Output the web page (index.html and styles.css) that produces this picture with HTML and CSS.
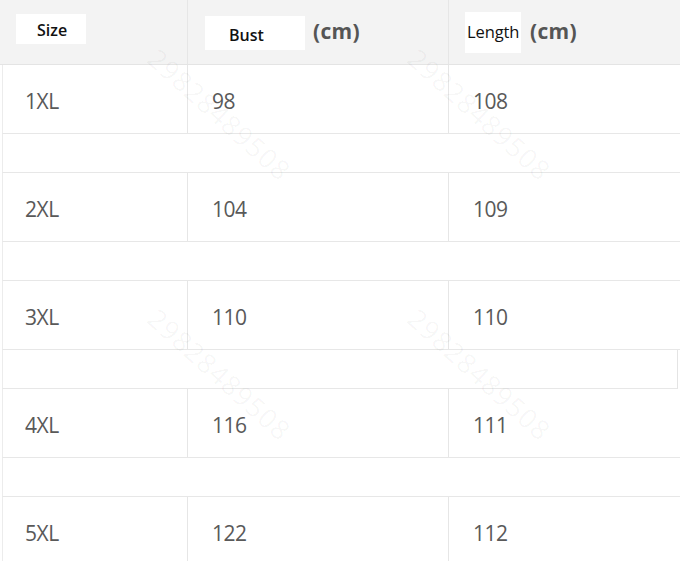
FILE: index.html
```html
<!DOCTYPE html>
<html>
<head>
<meta charset="utf-8">
<link rel="stylesheet" href="styles.css">
</head>
<body>
<div class="chart">
  <div class="row head">
    <div class="cell c1"><span class="tag tag-size">Size</span></div>
    <div class="cell c2"><span class="tag tag-bust">Bust</span><span class="unit">(cm)</span></div>
    <div class="cell c3"><span class="tag tag-len">Length</span><span class="unit">(cm)</span></div>
  </div>
  <div class="row data"><div class="cell c1">1XL</div><div class="cell c2">98</div><div class="cell c3">108</div></div>
  <div class="row gap"></div>
  <div class="row data"><div class="cell c1">2XL</div><div class="cell c2">104</div><div class="cell c3">109</div></div>
  <div class="row gap"></div>
  <div class="row data"><div class="cell c1">3XL</div><div class="cell c2">110</div><div class="cell c3">110</div></div>
  <div class="row gap gap-edge"></div>
  <div class="row data"><div class="cell c1">4XL</div><div class="cell c2">116</div><div class="cell c3">111</div></div>
  <div class="row gap"></div>
  <div class="row data"><div class="cell c1">5XL</div><div class="cell c2">122</div><div class="cell c3">112</div></div>

  <span class="wm wm1">29828489508</span>
  <span class="wm wm2">29828489508</span>
  <span class="wm wm3">29828489508</span>
  <span class="wm wm4">29828489508</span>
</div>
</body>
</html>
```
FILE: styles.css
```css
html, body {
  margin: 0;
  padding: 0;
  background: #ffffff;
}
body {
  width: 680px;
  height: 561px;
  overflow: hidden;
}
.chart {
  position: relative;
  width: 680px;
  height: 561px;
  overflow: hidden;
  font-family: "Open Sans", "Noto Sans", sans-serif;
}
.row {
  display: grid;
  grid-template-columns: 188px 261px 1fr;
  box-sizing: border-box;
  border-bottom: 1px solid #e7e7e7;
}
.head {
  height: 65px;
  background: #f3f3f3;
  border-bottom: 1px solid #e4e4e4;
}
.data {
  height: 69px;
  margin-left: 2px;
  border-left: 1px solid #ececec;
  grid-template-columns: 185px 261px 1fr;
}
.gap {
  height: 39px;
  margin-left: 2px;
  border-left: 1px solid #ececec;
}
.gap-edge {
  margin-right: 2px;
  border-right: 1px solid #e4e4e4;
}
.cell {
  box-sizing: border-box;
  border-right: 1px solid #e6e6e6;
  display: flex;
  align-items: center;
}
.cell.c3 {
  border-right: none;
}
.data .cell {
  padding-left: 22px;
  padding-top: 3px;
  font-size: 21px;
  color: #595959;
  letter-spacing: -0.5px;
}
.data .c2, .data .c3 {
  padding-left: 24px;
}
.head .cell {
  align-items: flex-start;
}
.tag {
  background: #ffffff;
  color: #111111;
  font-weight: 600;
  font-size: 16px;
  display: flex;
  box-sizing: border-box;
  white-space: nowrap;
}
.tag-size {
  margin: 14px 0 0 16px;
  width: 70px;
  height: 30px;
  padding: 5px 0 0 21px;
}
.tag-bust {
  margin: 16px 0 0 17px;
  width: 100px;
  height: 34px;
  padding: 8px 0 0 24px;
}
.tag-len {
  margin: 12px 0 0 16px;
  width: 56px;
  height: 41px;
  padding: 8px 0 0 2px;
  font-weight: 500;
  font-size: 16.5px;
  letter-spacing: -0.1px;
}
.unit {
  font-weight: 700;
  font-size: 21px;
  color: #555555;
  margin: 17px 0 0 8px;
  letter-spacing: 0.3px;
}
.c3 .unit {
  margin: 17px 0 0 9px;
}
.wm {
  position: absolute;
  font-size: 27px;
  color: rgba(0, 0, 0, 0.04);
  transform: rotate(42deg);
  transform-origin: left top;
  white-space: nowrap;
  letter-spacing: 1px;
  pointer-events: none;
}
.wm1 { left: 165px; top: 40px; }
.wm2 { left: 425px; top: 40px; }
.wm3 { left: 165px; top: 300px; }
.wm4 { left: 425px; top: 300px; }
```
